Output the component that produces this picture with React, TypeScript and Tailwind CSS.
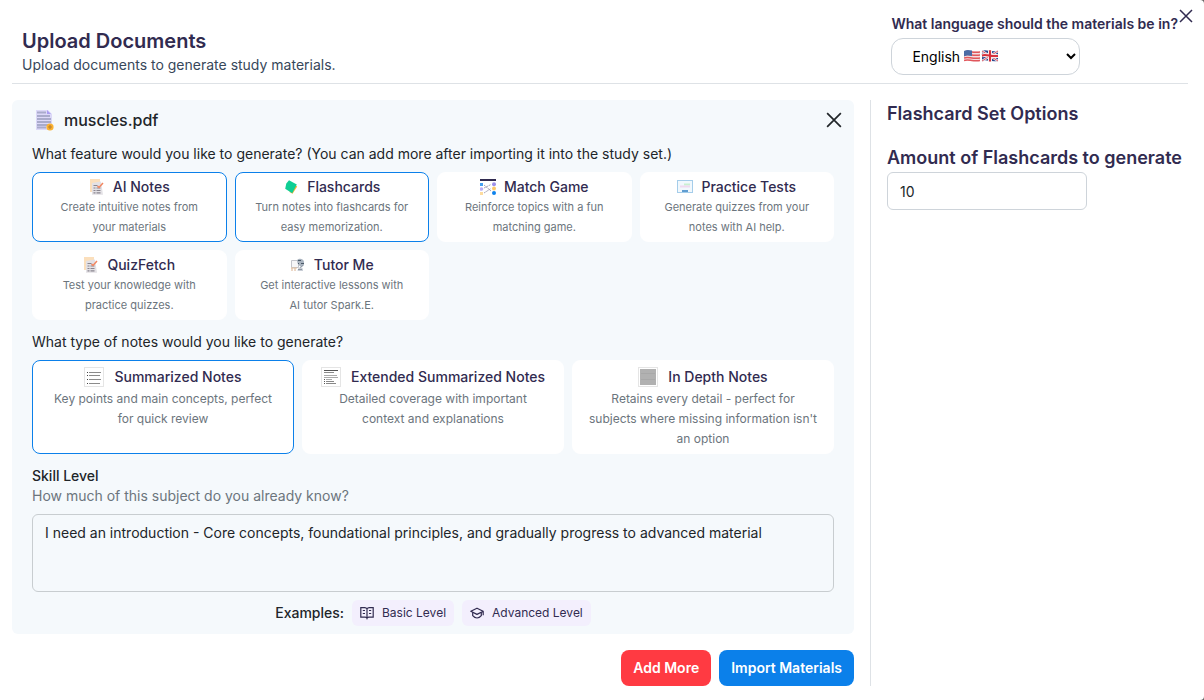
import { useState } from 'react';
import type { ReactNode } from 'react';

type Feature = {
  id: string;
  title: string;
  description: string;
  icon: ReactNode;
};

const ChecklistIcon = () => (
  <svg width="16" height="16" viewBox="0 0 16 16" aria-hidden="true">
    <path d="M1 0h10v13H1z" fill="#fbdfbc" />
    <path d="M3 4 12 2.500l2 13.200H3z" fill="#e3e1e5" />
    <path d="M4.500 6.500h4M4.500 9h2M7.500 9h4M4.500 11.500h2M7.500 11.500h4M4.500 13.800h2M7.500 13.800h4" stroke="#8a8690" strokeWidth="1.200" />
    <path d="M8.500 7 10 8.500 14 4" fill="none" stroke="#f28660" strokeWidth="1.500" />
  </svg>
);

const CardsIcon = () => (
  <svg width="16" height="16" viewBox="0 0 16 16" aria-hidden="true">
    <path d="M9 4 14.200 7.500 9.500 14.800 6.500 13z" fill="#fbae2c" />
    <path d="M6 1.200 13.800 5.500 9.200 14.200 2.200 9.800 3.300 4.500z" fill="#0fce94" />
  </svg>
);

const MatchIcon = () => (
  <svg width="16" height="16" viewBox="0 0 16 16" aria-hidden="true">
    <path d="M0 0h16v2H0z" fill="#312b50" />
    <path d="M4 6l7 6M4 9l7-3.500M4 14l7-4.500" stroke="#918da5" strokeWidth=".8" strokeDasharray="2 .6" />
    <path d="M0 4h3v3H0z" fill="#1587ee" opacity=".8" />
    <circle cx="1.500" cy="10" r="1.800" fill="#b9acf4" />
    <path d="M0 13h3v3H0z" fill="#fddc9f" />
    <circle cx="14" cy="5.200" r="2" fill="#9d90ea" />
    <circle cx="14" cy="9.600" r="2" fill="#fdca6c" />
    <circle cx="14" cy="14" r="2" fill="#0d82ec" />
  </svg>
);

const TestIcon = () => (
  <svg width="16" height="16" viewBox="0 0 16 16" aria-hidden="true">
    <rect x=".5" y="1.500" width="15" height="12" fill="#f1f8fd" stroke="#a5cdea" />
    <path d="M7 5.500h6" stroke="#c9f0d2" strokeWidth="2" />
    <path d="M3 7.500h10" stroke="#efdaf0" strokeWidth="2" />
    <path d="M5 12h6" stroke="#3d86c6" strokeWidth="1.600" />
  </svg>
);

const TutorIcon = () => (
  <svg width="16" height="16" viewBox="0 0 16 16" aria-hidden="true">
    <path d="M1.500 3.500h7v7h-7z" fill="#f6f6f8" stroke="#c3c4cb" />
    <path d="M2 11v3M5 10.500V14M1 11h6" stroke="#dfbfa2" strokeWidth="1.200" />
    <path d="M7 3.200C9 1 13 1.400 14 4.500v3c0 1-1 2-2.500 2S8 8 7.500 6z" fill="#a9b3bf" />
    <path d="M8 3.500h3M11 6.500h3M8 6.500h1" stroke="#4b5968" />
    <path d="M7.500 14c.5-3 1.500-4 3-4s2.500 1 2.500 4z" fill="#c9ced6" />
    <path d="M8 12.500h4M10 10.500l3-2" stroke="#7d8896" strokeWidth=".8" />
  </svg>
);

const FileIcon = () => (
  <svg width="24" height="24" viewBox="0 0 24 24" aria-hidden="true">
    <path d="M4 2h12l4 4v16H4z" fill="#dcd9f8" />
    <path d="M15 2v4h4z" fill="#a99df0" />
    <path d="M5 4.500h9M5 8h13M5 11h14M5 14h14M5 17h12M5 19.500h9" stroke="#a9abcb" strokeWidth="1.800" />
    <circle cx="18" cy="19" r="3.600" fill="#fbb12f" />
    <path d="M18 17v4M16 19h4" stroke="#b98132" strokeWidth="1.200" />
  </svg>
);

const SummaryIcon = () => (
  <svg width="20" height="20" viewBox="0 0 20 20" aria-hidden="true">
    <rect x=".5" y=".5" width="19" height="19" fill="#fff" stroke="#e5e5e5" />
    <path d="M5 5.500h12M5 8.500h11M5 12.500h12M5 16.500h11" stroke="#8b8b8b" />
    <path d="M3 5.500h1M3 8.500h1M3 12.500h1M3 16.500h1" stroke="#444" />
  </svg>
);

const ExtendedIcon = () => (
  <svg width="20" height="20" viewBox="0 0 20 20" aria-hidden="true">
    <rect x=".5" y=".5" width="19" height="19" fill="#fff" stroke="#e5e5e5" />
    <path d="M3 5.500h10M5 14.500h8M5 16.500h10" stroke="#888" />
    <path d="M3 8.500h13M3 10.500h14M5 12.500h6" stroke="#aaa" />
    <path d="M3 3.500h14M3 14.500h1M3 16.500h1M3 12.500h1" stroke="#555" />
  </svg>
);

const DepthIcon = () => (
  <svg width="20" height="20" viewBox="0 0 20 20" aria-hidden="true">
    <rect x=".5" y=".5" width="19" height="19" fill="#fff" stroke="#e5e5e5" />
    <path d="M2 2h16v16H2z" fill="#b1b1b1" />
    <path d="M3 6.500h14M3 12.500h14" stroke="#a8a8a8" />
  </svg>
);

const BookIcon = () => (
  <svg width="14" height="14" viewBox="0 0 14 14" fill="none" stroke="currentColor" aria-hidden="true">
    <path d="M7 2.800C6.500 1.900 5.800 1.600 4.800 1.600H.8v9.600h4.400c.9 0 1.500.400 1.800 1.200.3-.8.9-1.200 1.800-1.200h4.400V1.600h-4C8.200 1.600 7.500 1.900 7 2.800zM7 2.800v9.600" strokeWidth="1.200" />
    <path d="M2.800 4.500h2.200M2.800 7.500h2.200M9 4.500h2.200M9 7.500h2.200" />
  </svg>
);

const CapIcon = () => (
  <svg width="14" height="14" viewBox="0 0 14 14" fill="none" stroke="currentColor" strokeWidth="1.200" strokeLinejoin="round" aria-hidden="true">
    <path d="M7 2.200.8 5.300 7 8.400l6.200-3.100zM2.700 6.400v3.300C4 11.200 5.400 12 7 12s3-.8 4.300-2.300V6.400M13.200 5.300v4" />
  </svg>
);

const Flags = () => (
  <svg width="35" height="14" viewBox="0 0 35 14" aria-hidden="true">
    <path d="M0 2c4-2 7 1 16 0v10c-9 1-12-2-16 0z" fill="#f4dfe1" />
    <path d="M0 3c4-2 7 1 16 0M0 6c4-2 7 1 16 0M0 9c4-2 7 1 16 0M0 11.500c4-2 7 1 16 0" fill="none" stroke="#e0575c" strokeWidth="1.500" />
    <path d="M0 2c3-1.500 5-1 8-.4v5.400C5 6.500 3 6 0 7.500z" fill="#4b6ba5" />
    <path d="M18 2c4-2 7 1 16 0v10c-9 1-12-2-16 0z" fill="#2c4a8e" />
    <path d="M18 2l16 10M34 2 18 12" stroke="#eee7ee" strokeWidth="2.200" />
    <path d="M18 2l16 10M34 2 18 12" stroke="#cf3a48" strokeWidth=".8" />
    <path d="M26 1.200v11.400M18 6.500c4-1.500 9 1.200 16 .5" fill="none" stroke="#f5eeee" strokeWidth="4" />
    <path d="M26 1.200v11.400M18 6.500c4-1.500 9 1.200 16 .5" fill="none" stroke="#d6323e" strokeWidth="2" />
  </svg>
);

const CloseIcon = ({ size, strokeWidth }: { size: number; strokeWidth: number }) => (
  <svg width={size} height={size} viewBox="0 0 14 14" fill="none" stroke="currentColor" strokeWidth={strokeWidth} aria-hidden="true">
    <path d="M1 1l12 12M13 1 1 13" />
  </svg>
);

const features: Feature[] = [
  { id: 'notes', title: 'AI Notes', description: 'Create intuitive notes from your materials', icon: <ChecklistIcon /> },
  { id: 'flashcards', title: 'Flashcards', description: 'Turn notes into flashcards for easy memorization.', icon: <CardsIcon /> },
  { id: 'match', title: 'Match Game', description: 'Reinforce topics with a fun matching game.', icon: <MatchIcon /> },
  { id: 'tests', title: 'Practice Tests', description: 'Generate quizzes from your notes with AI help.', icon: <TestIcon /> },
  { id: 'quiz', title: 'QuizFetch', description: 'Test your knowledge with practice quizzes.', icon: <ChecklistIcon /> },
  { id: 'tutor', title: 'Tutor Me', description: 'Get interactive lessons with AI tutor Spark.E.', icon: <TutorIcon /> },
];

const noteTypes: Feature[] = [
  { id: 'summary', title: 'Summarized Notes', description: 'Key points and main concepts, perfect for quick review', icon: <SummaryIcon /> },
  { id: 'extended', title: 'Extended Summarized Notes', description: 'Detailed coverage with important context and explanations', icon: <ExtendedIcon /> },
  { id: 'depth', title: 'In Depth Notes', description: "Retains every detail - perfect for subjects where missing information isn't an option", icon: <DepthIcon /> },
];

const INTRO = 'I need an introduction - Core concepts, foundational principles, and gradually progress to advanced material';

export default function App() {
  const [selected, setSelected] = useState<string[]>(['notes', 'flashcards']);
  const [noteType, setNoteType] = useState('summary');
  const [skill, setSkill] = useState(INTRO);
  const [amount, setAmount] = useState('10');

  const toggleFeature = (id: string) => {
    setSelected((prev) => (prev.includes(id) ? prev.filter((f) => f !== id) : [...prev, id]));
  };

  return (
    <div className="bg-[#666666] font-['Inter',sans-serif]">
      <div className="relative min-h-screen rounded-r bg-white pl-3 pr-4 pt-3.5 pb-3.5 text-sm text-[#212529]">
        <button type="button" aria-label="Close" className="absolute right-[11px] top-[9px] text-[#312b50]">
          <CloseIcon size={14} strokeWidth={1.5} />
        </button>

        {/* Header */}
        <header className="flex items-end justify-between border-b border-[#dee2e6] pb-2">
          <div className="pl-2.5">
            <h1 className="text-xl leading-7 font-semibold text-[#312b50]">Upload Documents</h1>
            <p className="text-[#37475a]">Upload documents to generate study materials.</p>
          </div>
          <div className="flex flex-col items-start gap-1 pr-2.5">
            <label htmlFor="language" className="font-semibold text-[#312b50]">
              What language should the materials be in?
            </label>
            <div className="relative">
              <select id="language" className="h-[37px] w-[189px] rounded-xl border border-[#ced4da] bg-white pl-4 text-black">
                <option>English</option>
              </select>
              <span className="pointer-events-none absolute left-[73px] top-[11px]">
                <Flags />
              </span>
            </div>
          </div>
        </header>

        <div className="mt-4 flex gap-4">
          <main className="min-w-0 flex-1">
            <section className="rounded-md bg-[#f5f9fc] px-5 pt-2 pb-2">
              {/* File name */}
              <div className="flex items-center justify-between">
                <div className="flex items-center gap-2">
                  <FileIcon />
                  <h2 className="text-base font-medium">muscles.pdf</h2>
                </div>
                <button type="button" aria-label="Remove file" className="-mr-2">
                  <CloseIcon size={16} strokeWidth={1.5} />
                </button>
              </div>

              <p className="mt-3">What feature would you like to generate? (You can add more after importing it into the study set.)</p>
              <div className="mt-2 grid grid-cols-4 gap-2">
                {features.map((feature) => (
                  <button
                    key={feature.id}
                    type="button"
                    aria-pressed={selected.includes(feature.id)}
                    onClick={() => toggleFeature(feature.id)}
                    className={`flex flex-col items-center rounded-lg border bg-white px-[19px] py-1 ${
                      selected.includes(feature.id) ? 'border-[#0b80ea]' : 'border-white'
                    }`}
                  >
                    <span className="flex items-center gap-2 font-medium text-[#312b50]">
                      {feature.icon}
                      {feature.title}
                    </span>
                    <span className="text-[11px] leading-5 text-[#6c757d]">{feature.description}</span>
                  </button>
                ))}
              </div>

              <p className="mt-3">What type of notes would you like to generate?</p>
              <div className="mt-2 grid grid-cols-3 gap-2">
                {noteTypes.map((type) => (
                  <button
                    key={type.id}
                    type="button"
                    aria-pressed={noteType === type.id}
                    onClick={() => setNoteType(type.id)}
                    className={`flex flex-col items-center gap-0.5 rounded-lg border bg-white px-3.5 pt-1.5 pb-1 ${
                      noteType === type.id ? 'border-[#0b80ea]' : 'border-white'
                    }`}
                  >
                    <span className="flex items-center gap-2.5 font-medium text-[#312b50]">
                      {type.icon}
                      {type.title}
                    </span>
                    <span className="text-xs leading-5 text-[#6c757d]">{type.description}</span>
                  </button>
                ))}
              </div>

              {/* Skill level */}
              <label htmlFor="skill" className="mt-3 block font-medium">
                Skill Level
              </label>
              <p className="text-[#6c757d]">How much of this subject do you already know?</p>
              <textarea
                id="skill"
                value={skill}
                onChange={(e) => setSkill(e.target.value)}
                className="mt-2 block h-[78px] w-full resize-none rounded-md border border-[#c8cdd0] bg-transparent px-3 py-2"
              />
              <div className="mt-2 flex items-center justify-center gap-2">
                <span className="font-medium">Examples:</span>
                <button type="button" className="flex h-[26px] items-center gap-2 rounded-md bg-[#f3effd] px-2 text-xs text-[#312b50]">
                  <BookIcon />
                  Basic Level
                </button>
                <button type="button" className="flex h-[26px] items-center gap-2 rounded-md bg-[#f3effd] px-2 text-xs text-[#312b50]">
                  <CapIcon />
                  Advanced Level
                </button>
              </div>
            </section>

            <div className="mt-4 flex justify-end gap-2 font-semibold text-white">
              <button type="button" className="rounded-lg bg-[#ff3a42] px-3 py-2">
                Add More
              </button>
              <button type="button" className="rounded-lg bg-[#0b80ea] px-3 py-2">
                Import Materials
              </button>
            </div>
          </main>

          {/* Flashcard options */}
          <aside className="w-[318px] shrink-0 border-l border-[#dee2e6] pl-4 text-[#312b50]">
            <h2 className="text-lg font-semibold">Flashcard Set Options</h2>
            <label htmlFor="amount" className="mt-4 block text-lg font-semibold">
              Amount of Flashcards to generate
            </label>
            <input
              id="amount"
              type="text"
              inputMode="numeric"
              value={amount}
              onChange={(e) => setAmount(e.target.value)}
              className="h-[38px] w-[200px] rounded-md border border-[#ced4da] px-3 text-[#212529]"
            />
          </aside>
        </div>
      </div>
    </div>
  );
}
